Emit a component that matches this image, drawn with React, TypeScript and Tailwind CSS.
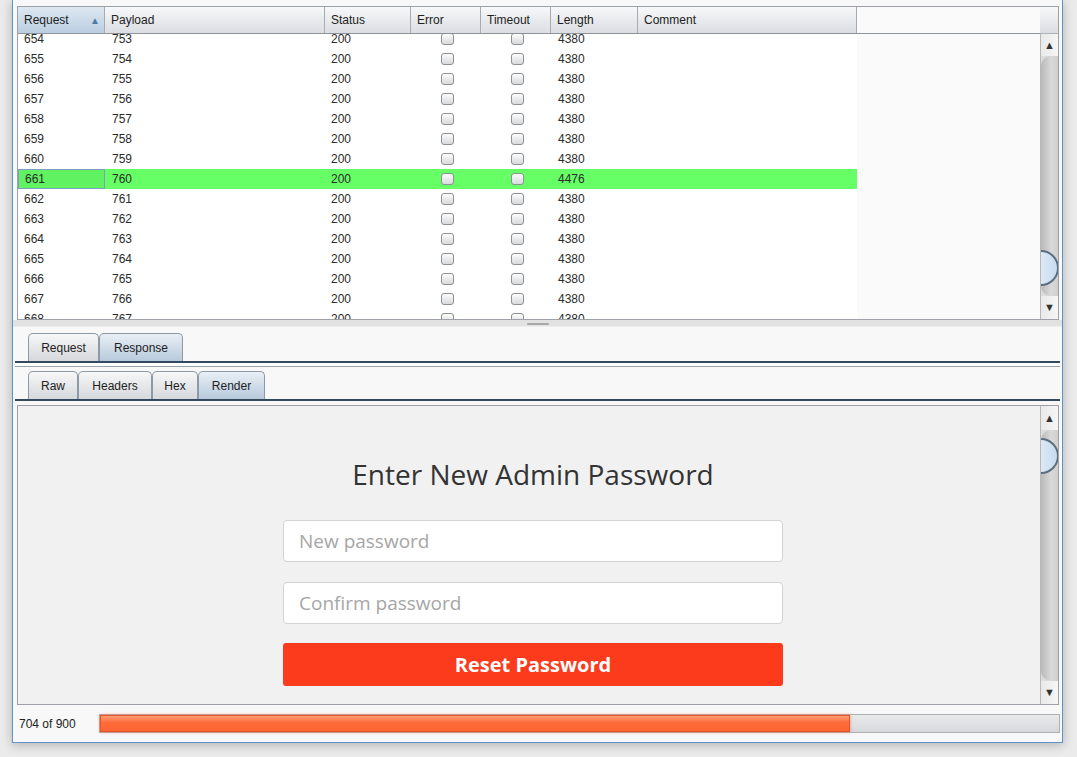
import React from 'react';

const cols = [
  { w: 'w-[87px]', label: 'Request', key: 'req' },
  { w: 'w-[220px]', label: 'Payload', key: 'pay' },
  { w: 'w-[86px]', label: 'Status', key: 'st' },
  { w: 'w-[70px]', label: 'Error', key: 'err' },
  { w: 'w-[70px]', label: 'Timeout', key: 'to' },
  { w: 'w-[87px]', label: 'Length', key: 'len' },
  { w: 'w-[219px]', label: 'Comment', key: 'com' },
];

const rows = Array.from({ length: 15 }, (_, i) => ({
  req: 654 + i,
  pay: 753 + i,
  len: 654 + i === 661 ? 4476 : 4380,
}));

function Checkbox() {
  return (
    <span className="block w-[13px] h-[12px] rounded-[3px] border border-[#8e9094] bg-[linear-gradient(#fdfdfd,#d7d9dc)]" />
  );
}

function ScrollBar({ upH, downH, thumbTop }: { upH: string; downH: string; thumbTop: string }) {
  return (
    <div className="w-[18px] flex flex-col border-l border-[#b8b8b8] bg-[#dcdcdc]">
      <div className={`${upH} flex items-center justify-center bg-[linear-gradient(90deg,#e9e9e9,#f6f6f6)] text-[11px] text-[#333]`}>▲</div>
      <div className="flex-1 overflow-hidden rounded-tl-[10px] rounded-bl-[10px] bg-[linear-gradient(90deg,#b9b9b9,#d9d9d9_60%,#cfcfcf)]">
        <div className={`${thumbTop} ml-[-18px] w-[36px] h-[36px] rounded-full border-2 border-[#5b6e82] bg-[linear-gradient(90deg,#f2f6fa,#c7dbef)]`} />
      </div>
      <div className={`${downH} flex items-center justify-center bg-[linear-gradient(90deg,#e9e9e9,#f6f6f6)] text-[11px] text-[#333]`}>▼</div>
    </div>
  );
}

function Tab({ label, w, active }: { label: string; w: string; active?: boolean }) {
  return (
    <div
      className={`${w} h-[28px] flex items-center justify-center rounded-t-[5px] border border-b-0 border-[#8d99a5] text-[12px] text-[#222] ${
        active ? 'bg-[linear-gradient(#e9eff5,#b7cadc)]' : 'bg-[linear-gradient(#f7f7f7,#d5d8dc)]'
      }`}
    >
      {label}
    </div>
  );
}

export default function App() {
  return (
    <div className="w-[1077px] h-[757px] bg-[#ebebeb] overflow-hidden font-['Liberation_Sans',Arial,sans-serif]">
      <div className="ml-[12px] w-[1051px] h-[743px] flex flex-col border-l border-r border-b border-[#5f93c4] bg-[#f8f8f8] shadow-[0_2px_10px_rgba(0,0,0,0.25)]">
        {/* results table */}
        <div className="mt-[6px] ml-[4px] w-[1042px] h-[314px] flex border border-[#9ea2a8] bg-[#fafafa]">
          <div className="w-[1022px] flex flex-col">
            <div className="h-[27px] flex border-b border-[#8f949b]">
              {cols.map((c) => (
                <div
                  key={c.key}
                  className={`${c.w} flex items-center pl-[6px] border-r border-[#a7abb1] text-[12px] text-[#222] ${
                    c.key === 'req' ? 'bg-[linear-gradient(#dde7f1,#bacee1)]' : 'bg-[linear-gradient(#f7f8f9,#dadde2)]'
                  }`}
                >
                  <span className="flex-1">{c.label}</span>
                  {c.key === 'req' && <span className="mr-[4px] text-[10px] text-[#4f79a6]">▲</span>}
                </div>
              ))}
              <div className="flex-1 bg-[#fafafa]" />
            </div>
            <div className="flex-1 flex overflow-hidden">
              <div className="w-[839px] bg-white">
                <div className="-mt-[5px]">
                  {rows.map((r) => {
                    const sel = r.req === 661;
                    return (
                      <div key={r.req} className={`h-[20px] flex text-[12px] text-[#2b2b2b] ${sel ? 'bg-[#66ff66]' : ''}`}>
                        <div className={`w-[87px] flex items-center pl-[6px] ${sel ? 'border border-[#7d9fbf] bg-[#60f260]' : ''}`}>{r.req}</div>
                        <div className="w-[220px] flex items-center pl-[7px]">{r.pay}</div>
                        <div className="w-[86px] flex items-center pl-[6px]">200</div>
                        <div className="w-[70px] flex items-center justify-center pl-[2px]"><Checkbox /></div>
                        <div className="w-[70px] flex items-center justify-center pl-[2px]"><Checkbox /></div>
                        <div className="w-[87px] flex items-center pl-[7px]">{r.len}</div>
                        <div className="w-[219px]" />
                      </div>
                    );
                  })}
                </div>
              </div>
              <div className="flex-1 bg-[#fafafa]" />
            </div>
          </div>
          <div className="flex flex-col">
            <div className="w-[18px] h-[27px] border-b border-[#b0b4ba] bg-[linear-gradient(#f7f8f9,#dadde2)]" />
            <div className="flex-1 flex">
              <ScrollBar upH="h-[22px]" downH="h-[23px]" thumbTop="mt-[194px]" />
            </div>
          </div>
        </div>

        {/* splitter */}
        <div className="h-[12px] bg-[linear-gradient(#e2e2e2,#e2e2e2_6px,#f8f8f8_7px)] flex justify-center">
          <span className="mt-[3px] w-[22px] h-[2px] rounded bg-[#a9a9a9]" />
        </div>

        {/* request / response tabs */}
        <div className="mt-[1px] ml-[15px] flex">
          <Tab label="Request" w="w-[71px]" />
          <Tab label="Response" w="w-[84px]" active />
        </div>
        <div className="mx-[2px] h-[2px] bg-[#34495e]" />
        <div className="mx-[2px] h-[3px] bg-white" />
        <div className="mx-[2px] h-[1px] bg-[#9aa3ad]" />
        <div className="mt-[4px] ml-[15px] flex">
          <Tab label="Raw" w="w-[50px]" />
          <Tab label="Headers" w="w-[74px]" />
          <Tab label="Hex" w="w-[46px]" />
          <Tab label="Render" w="w-[67px]" active />
        </div>
        <div className="mx-[2px] h-[2px] bg-[#34495e]" />
        <div className="h-[4px]" />

        {/* rendered response */}
        <div className="ml-[4px] w-[1042px] h-[300px] flex border border-[#9ea2a8] bg-[#f1f1f1]">
          <div className="flex-1 pl-[8px] pt-[51px] font-['Open_Sans',sans-serif]">
            <h1 className="text-center text-[28px] leading-[34px] text-[#333]">Enter New Admin Password</h1>
            <div className="mt-[29px] mx-auto w-[500px] flex flex-col">
              <div className="h-[42px] rounded-[4px] border border-[#d3d3d3] bg-white pl-[15px] flex items-center text-[19px] text-[#a6a6a6]">New password</div>
              <div className="mt-[20px] h-[42px] rounded-[4px] border border-[#d3d3d3] bg-white pl-[15px] flex items-center text-[19px] text-[#a6a6a6]">Confirm password</div>
              <div className="mt-[19px] h-[43px] rounded-[3px] bg-[#fc3a1c] flex items-center justify-center text-[20px] font-bold text-white">Reset Password</div>
            </div>
          </div>
          <ScrollBar upH="h-[24px]" downH="h-[23px]" thumbTop="mt-[8px]" />
        </div>

        {/* status bar */}
        <div className="flex-1 flex items-center pl-[6px] pr-[2px]">
          <span className="w-[80px] text-[12px] text-[#222]">704 of 900</span>
          <div className="flex-1 h-[19px] flex border border-[#adb0b4] bg-[linear-gradient(#e9eaeb,#d6d8db)]">
            <div className="w-[750px] border border-[#e0552b] bg-[linear-gradient(#ff9a74,#ff6b3a_45%,#fc6532)] shadow-[0_0_3px_rgba(255,90,40,0.6)]" />
          </div>
        </div>
      </div>
    </div>
  );
}
